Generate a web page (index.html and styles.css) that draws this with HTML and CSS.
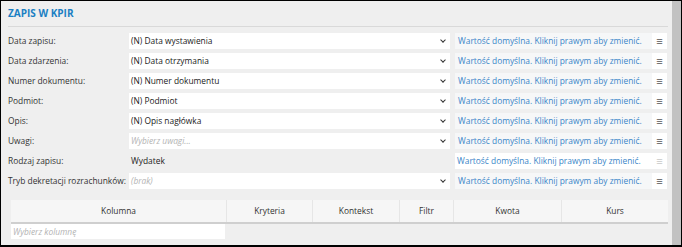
FILE: index.html
```html
<!DOCTYPE html>
<html lang="pl">
<head>
  <meta charset="UTF-8">
  <title>Zapis w KPiR</title>
  <link rel="stylesheet" href="styles.css">
</head>
<body>
  <div class="window">
    <div class="content">
      <h2 class="title">ZAPIS W KPIR</h2>

      <div class="form">
        <div class="row">
          <div class="label">Data zapisu:</div>
          <div class="select">(N) Data wystawienia<span class="chevron"></span></div>
          <div class="info">Wartość domyślna. Kliknij prawym aby zmienić.</div>
          <div class="menu">&#8801;</div>
        </div>
        <div class="row">
          <div class="label">Data zdarzenia:</div>
          <div class="select">(N) Data otrzymania<span class="chevron"></span></div>
          <div class="info">Wartość domyślna. Kliknij prawym aby zmienić.</div>
          <div class="menu">&#8801;</div>
        </div>
        <div class="row">
          <div class="label">Numer dokumentu:</div>
          <div class="select">(N) Numer dokumentu<span class="chevron"></span></div>
          <div class="info">Wartość domyślna. Kliknij prawym aby zmienić.</div>
          <div class="menu">&#8801;</div>
        </div>
        <div class="row">
          <div class="label">Podmiot:</div>
          <div class="select">(N) Podmiot<span class="chevron"></span></div>
          <div class="info">Wartość domyślna. Kliknij prawym aby zmienić.</div>
          <div class="menu">&#8801;</div>
        </div>
        <div class="row">
          <div class="label">Opis:</div>
          <div class="select">(N) Opis nagłówka<span class="chevron"></span></div>
          <div class="info">Wartość domyślna. Kliknij prawym aby zmienić.</div>
          <div class="menu">&#8801;</div>
        </div>
        <div class="row">
          <div class="label">Uwagi:</div>
          <div class="select placeholder">Wybierz uwagi...<span class="chevron"></span></div>
          <div class="info">Wartość domyślna. Kliknij prawym aby zmienić.</div>
          <div class="menu">&#8801;</div>
        </div>
        <div class="row readonly">
          <div class="label">Rodzaj zapisu:</div>
          <div class="select">Wydatek</div>
          <div class="info">Wartość domyślna. Kliknij prawym aby zmienić.</div>
          <div class="menu">&#8801;</div>
        </div>
        <div class="row">
          <div class="label">Tryb dekretacji rozrachunków:</div>
          <div class="select placeholder">(brak)<span class="chevron"></span></div>
          <div class="info">Wartość domyślna. Kliknij prawym aby zmienić.</div>
          <div class="menu">&#8801;</div>
        </div>
      </div>

      <div class="grid">
        <div class="grid-head">
          <div class="col col-kolumna">Kolumna</div>
          <div class="col col-kryteria">Kryteria</div>
          <div class="col col-kontekst">Kontekst</div>
          <div class="col col-filtr">Filtr</div>
          <div class="col col-kwota">Kwota</div>
          <div class="col col-kurs">Kurs</div>
        </div>
        <div class="grid-row">
          <div class="pick">Wybierz kolumnę</div>
        </div>
      </div>
    </div>
    <div class="scrollbar"></div>
  </div>
</body>
</html>
```

FILE: styles.css
```css
html {
  background: #000;
}

body {
  margin: 0;
  font-family: 'Open Sans', sans-serif;
  font-size: 8.4px;
  color: #333;
}

.window {
  display: flex;
  width: 682px;
  height: 247px;
  box-sizing: border-box;
  border-top: 1px solid #000;
  border-left: 1px solid #000;
  border-right: 1px solid #000;
  border-bottom: 2px solid #000;
  background: #efefef;
}

.content {
  flex: 1;
  padding: 0 4px 0 7px;
}

.scrollbar {
  width: 9px;
  background: #c2c2c2;
}

.title {
  margin: 0;
  height: 25px;
  line-height: 25px;
  font-size: 10px;
  font-weight: bold;
  color: #1b7fc3;
  border-bottom: 1px solid #d9d9d9;
}

.form {
  display: flex;
  flex-direction: column;
  gap: 4px;
  margin-top: 6px;
}

.row {
  display: flex;
  height: 16px;
  line-height: 16px;
}

.label {
  width: 121px;
  white-space: nowrap;
}

.select {
  position: relative;
  width: 321px;
  padding-left: 2px;
  box-sizing: border-box;
  background: #fff;
  color: #222;
}

.select.placeholder {
  color: #b3b3b3;
  font-style: italic;
}

.chevron {
  position: absolute;
  right: 5px;
  top: 5px;
  width: 3px;
  height: 3px;
  border-right: 1.5px solid #333;
  border-bottom: 1.5px solid #333;
  transform: rotate(45deg);
}

.info {
  width: 197px;
  margin-left: 5px;
  padding-left: 3px;
  box-sizing: border-box;
  background: #f6f7f8;
  color: #3a86c8;
  white-space: nowrap;
}

.menu {
  width: 15px;
  background: #fff;
  text-align: center;
  font-size: 11px;
  color: #555;
}

.readonly .select {
  background: #efefef;
}

.readonly .info {
  background: #fff;
  padding-left: 2px;
}

.readonly .menu {
  color: #c8c8c8;
}

.grid {
  margin: 11px 0 0 3px;
}

.grid-head {
  display: flex;
  height: 22px;
  line-height: 22px;
  background: #f6f6f6;
  border-bottom: 2px solid #cfcfcf;
  color: #333;
}

.col {
  text-align: center;
  border-left: 1px solid #e6e6e6;
}

.col-kolumna { width: 215px; border-left: none; }
.col-kryteria { width: 85px; }
.col-kontekst { width: 86px; }
.col-filtr { width: 53px; }
.col-kwota { width: 107px; }
.col-kurs { flex: 1; }

.grid-row {
  height: 15px;
}

.pick {
  width: 214px;
  height: 15px;
  line-height: 15px;
  padding-left: 2px;
  box-sizing: border-box;
  background: #fff;
  color: #b3b3b3;
  font-style: italic;
}
```
